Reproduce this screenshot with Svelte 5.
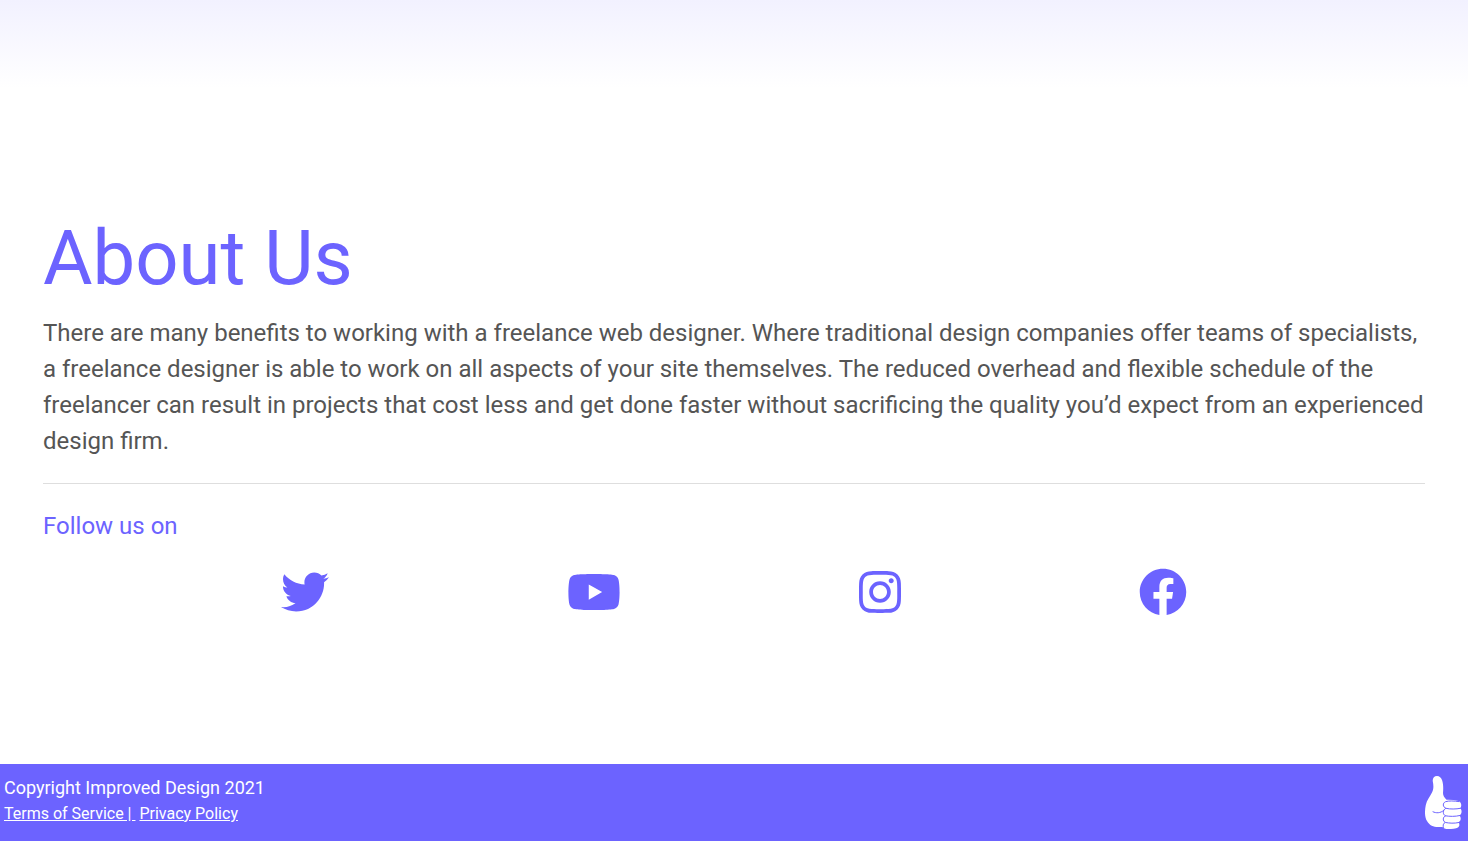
<script>
  const socials = [
    {
      name: 'Twitter',
      width: 512,
      path: 'M459.37 151.716c.325 4.548.325 9.097.325 13.645 0 138.72-105.583 298.558-298.558 298.558-59.452 0-114.68-17.219-161.137-47.106 8.447.974 16.568 1.299 25.34 1.299 49.055 0 94.213-16.568 130.274-44.832-46.132-.975-84.792-31.188-98.112-72.772 6.498.974 12.995 1.624 19.818 1.624 9.421 0 18.843-1.3 27.614-3.573-48.081-9.747-84.143-51.98-84.143-102.985v-1.299c13.969 7.797 30.214 12.67 47.431 13.319-28.264-18.843-46.781-51.005-46.781-87.391 0-19.492 5.197-37.36 14.294-52.954 51.655 63.675 129.3 105.258 216.365 109.807-1.624-7.797-2.599-15.918-2.599-24.04 0-57.828 46.782-104.934 104.934-104.934 30.213 0 57.502 12.67 76.67 33.137 23.715-4.548 46.456-13.32 66.599-25.34-7.798 24.366-24.366 44.833-46.132 57.827 21.117-2.273 41.584-8.122 60.426-16.243-14.292 20.791-32.161 39.308-52.628 54.253z'
    },
    {
      name: 'YouTube',
      width: 576,
      path: 'M549.655 124.083c-6.281-23.65-24.787-42.276-48.284-48.597C458.781 64 288 64 288 64S117.22 64 74.629 75.486c-23.497 6.322-42.003 24.947-48.284 48.597-11.412 42.867-11.412 132.305-11.412 132.305s0 89.438 11.412 132.305c6.281 23.65 24.787 41.5 48.284 47.821C117.22 448 288 448 288 448s170.78 0 213.371-11.486c23.497-6.321 42.003-24.171 48.284-47.821 11.412-42.867 11.412-132.305 11.412-132.305s0-89.438-11.412-132.305zm-317.51 213.508V175.185l142.739 81.205-142.739 81.201z'
    },
    {
      name: 'Instagram',
      width: 448,
      path: 'M224.1 141c-63.6 0-114.9 51.3-114.9 114.9s51.3 114.9 114.9 114.9S339 319.5 339 255.9 287.7 141 224.1 141zm0 189.6c-41.1 0-74.7-33.5-74.7-74.7s33.5-74.7 74.7-74.7 74.7 33.5 74.7 74.7-33.6 74.7-74.7 74.7zm146.4-194.3c0 14.9-12 26.8-26.8 26.8-14.9 0-26.8-12-26.8-26.8s12-26.8 26.8-26.8 26.8 12 26.8 26.8zm76.1 27.2c-1.7-35.9-9.9-67.7-36.2-93.9-26.2-26.2-58-34.4-93.9-36.2-37-2.1-147.9-2.1-184.9 0-35.8 1.7-67.6 9.9-93.9 36.1s-34.4 58-36.2 93.9c-2.1 37-2.1 147.9 0 184.9 1.7 35.9 9.9 67.7 36.2 93.9s58 34.4 93.9 36.2c37 2.1 147.9 2.1 184.9 0 35.9-1.7 67.7-9.9 93.9-36.2 26.2-26.2 34.4-58 36.2-93.9 2.1-37 2.1-147.8 0-184.8zM398.8 388c-7.8 19.6-22.9 34.7-42.6 42.6-29.5 11.7-99.5 9-132.1 9s-102.7 2.6-132.1-9c-19.6-7.8-34.7-22.9-42.6-42.6-11.7-29.5-9-99.5-9-132.1s-2.6-102.7 9-132.1c7.8-19.6 22.9-34.7 42.6-42.6 29.5-11.7 99.5-9 132.1-9s102.7-2.6 132.1 9c19.6 7.8 34.7 22.9 42.6 42.6 11.7 29.5 9 99.5 9 132.1s2.7 102.7-9 132.1z'
    },
    {
      name: 'Facebook',
      width: 512,
      path: 'M504 256C504 119 393 8 256 8S8 119 8 256c0 123.78 90.69 226.38 209.25 245V327.69h-63V256h63v-54.64c0-62.15 37-96.48 93.67-96.48 27.14 0 55.52 4.84 55.52 4.84v61h-31.28c-30.8 0-40.41 19.12-40.41 38.73V256h68.78l-11 71.69h-57.78V501C413.31 482.38 504 379.78 504 256z'
    }
  ];
</script>

<div class="page">
  <main>
    <h1>About Us</h1>
    <p>
      There are many benefits to working with a freelance web designer. Where traditional design
      companies offer teams of specialists, a freelance designer is able to work on all aspects of
      your site themselves. The reduced overhead and flexible schedule of the freelancer can result
      in projects that cost less and get done faster without sacrificing the quality you’d expect
      from an experienced design firm.
    </p>
    <hr />
    <h2>Follow us on</h2>
    <nav class="socials" aria-label="Social media">
      {#each socials as social}
        <a href="#{social.name.toLowerCase()}" aria-label={social.name}>
          <svg viewBox="0 0 {social.width} 512" aria-hidden="true"><path d={social.path} /></svg>
        </a>
      {/each}
    </nav>
  </main>

  <footer>
    <div>
      <div class="copyright">Copyright Improved Design 2021</div>
      <div class="legal">
        <a href="#terms">Terms of Service |&nbsp;</a>
        <a href="#privacy">Privacy Policy</a>
      </div>
    </div>
    <svg class="thumb" viewBox="0 0 37 53" aria-hidden="true">
      <path
        class="hand"
        d="M12 0C9 0 7.300 2.500 7.800 5.500C8.600 9.500 8.800 13 7 16.500C5 20.500 1.800 24 .8 29C-.4 35-.5 41 2 45C4.500 49.500 8.500 51 13 51H17.500C18.500 52.500 20.500 53 23 53C27 53 31 53 33 51.500C35 50 34.500 47.500 33.500 46.300C36 45 36.500 41.500 34.500 39.500C37 38 37.200 34 35.300 32.200C37 30 36.500 26 33.500 25C29.500 24 25.500 23.500 21.500 23.700C19.200 21.500 18 19.500 18 17C18.300 13 18.500 9 17.200 4.500C16.200 1.500 14.500 0 12 0Z"
      />
      <path
        class="crease"
        d="M35.500 32.300C31 33.200 25 33.300 21 32.300C17.500 31 17.500 27 20.500 25.700C24 24.600 29 24.900 34 25.600M35 39.500C30 40.700 24.500 40.500 20.500 39.800C17.500 38.500 17.500 34 20.500 32.500M34 46.500C29 47.600 24.500 47.200 20.500 46.500C17.500 45 17.500 41 20.500 39.800M20 46.500C17.800 47.500 17.800 50 18.500 51.500M8 35.800C11 37.300 15.500 37.300 18.500 34.500"
      />
    </svg>
  </footer>
</div>

<style>
  :global(body) {
    margin: 0;
    background: #fff;
  }

  .page {
    display: flex;
    flex-direction: column;
    min-height: 100vh;
    font-family: Roboto, sans-serif;
    color: #555;
    background: linear-gradient(#f2f1ff, #fff 88px);
  }

  main {
    flex: 1;
    padding: 213px 43px 0;
  }

  h1,
  h2 {
    margin: 0;
    font-weight: 400;
    color: #6c63ff;
  }

  h1 {
    font-size: 76px;
    line-height: 91px;
  }

  p {
    margin: 11px 0 24px;
    font-size: 24px;
    line-height: 36px;
  }

  hr {
    height: 1px;
    margin: 0 0 24px;
    border: 0;
    background: #dedede;
  }

  h2 {
    font-size: 24px;
    line-height: 36px;
  }

  .socials {
    display: flex;
    justify-content: space-evenly;
    margin-top: 24px;
  }

  .socials a {
    color: #6c63ff;
  }

  .socials svg {
    display: block;
    height: 48px;
    fill: currentColor;
  }

  footer {
    display: flex;
    justify-content: space-between;
    align-items: flex-start;
    padding: 12px 6px 12px 4px;
    color: #fff;
    background: #6c63ff;
  }

  .copyright {
    font-size: 18px;
    line-height: 24px;
  }

  .legal {
    font-size: 16px;
    line-height: 28px;
  }

  .legal a {
    color: inherit;
  }

  .thumb {
    width: 37px;
    height: 53px;
  }

  .hand {
    fill: #fff;
  }

  .crease {
    fill: none;
    stroke: #6c63ff;
    stroke-width: 1;
    stroke-linecap: round;
  }
</style>
